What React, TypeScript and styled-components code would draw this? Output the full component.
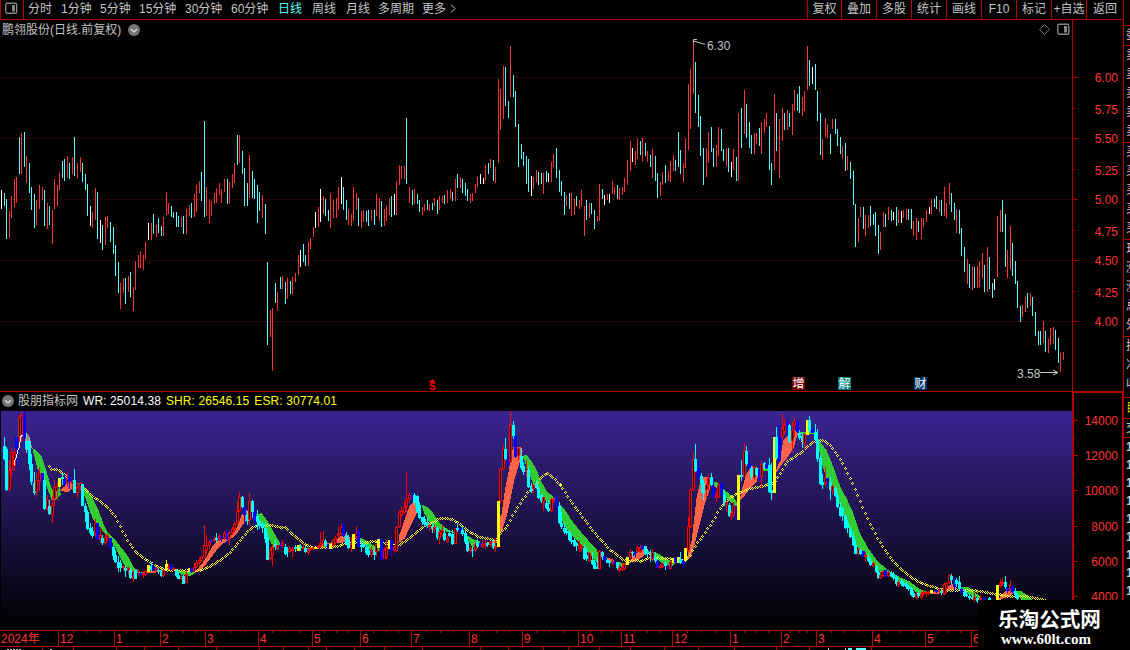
import React from "react";
import styled, { createGlobalStyle } from "styled-components";

const RED = "#b40000";
const FONT = '"Liberation Sans", "Noto Sans CJK SC", sans-serif';

const Global = createGlobalStyle`
  html, body { margin: 0; padding: 0; background: #000; overflow: hidden; }
  * { box-sizing: border-box; }
`;

const Page = styled.div`
  position: relative;
  display: flex;
  width: 1130px;
  height: 650px;
  overflow: hidden;
  background: #000;
  color: #c4c4c4;
  font: 12px/20px ${FONT};
  white-space: nowrap;
`;
const Main = styled.div`
  flex: none;
  width: 1123px;
  display: flex;
  flex-direction: column;
`;
const Toolbar = styled.div`
  display: flex;
  flex: none;
  height: 20px;
  line-height: 19px;
  border-bottom: 1px solid ${RED};
`;
const ToggleCell = styled.div`
  width: 24px;
  height: 19px;
  padding: 2px 0 0 4px;
  border-left: 1px solid ${RED};
  border-right: 1px solid ${RED};
  margin-right: 4px;
  svg { display: block; }
`;
const Tab = styled.div<{ $w: number; $active?: boolean }>`
  width: ${(p) => p.$w}px;
  color: ${(p) => (p.$active ? "#54fcfc" : "#c4c4c4")};
`;
const Actions = styled.div`
  display: flex;
  margin-left: auto;
`;
const Action = styled.div<{ $w: number }>`
  width: ${(p) => p.$w}px;
  border-left: 1px solid ${RED};
  text-align: center;
`;
const Workspace = styled.div`
  display: flex;
  flex: none;
  height: 630px;
`;
const Charts = styled.div`
  flex: none;
  width: 1072px;
  display: flex;
  flex-direction: column;
  svg { display: block; flex: none; }
`;
const TitleRow = styled.div`
  display: flex;
  flex: none;
  align-items: center;
  height: 19px;
  padding: 0 2px 0 2px;
  gap: 7px;
`;
const TitleTools = styled.div`
  display: flex;
  align-items: center;
  gap: 7px;
  margin-left: auto;
`;
const IndicatorRow = styled.div`
  display: flex;
  flex: none;
  align-items: center;
  gap: 5px;
  height: 20px;
  padding: 0 0 2px 2px;
  border-top: 1px solid ${RED};
`;
const Value = styled.span<{ $color: string }>`
  color: ${(p) => p.$color};
  letter-spacing: 0.1px;
`;
const Name = styled.span`
  margin-left: -1px;
`;
const SidePanel = styled.div`
  flex: none;
  width: 7px;
  display: flex;
  flex-direction: column;
  border-left: 1px solid ${RED};
  overflow: hidden;
`;
const SideGroup = styled.div<{ $h: number }>`
  flex: none;
  height: ${(p) => p.$h}px;
  border-bottom: 1px solid ${RED};
  overflow: hidden;
`;
const SideRow = styled.div<{ $h: number; $color?: string; $bold?: boolean }>`
  height: ${(p) => p.$h}px;
  line-height: ${(p) => p.$h}px;
  padding-left: 2px;
  color: ${(p) => p.$color || "#c4c4c4"};
  font-weight: ${(p) => (p.$bold ? 700 : 400)};
`;
const Watermark = styled.div`
  position: absolute;
  right: 0;
  bottom: 0;
  width: 152px;
  height: 50px;
  padding: 5px 0 0 20px;
  background: #000;
  color: #fff;
`;
const SiteName = styled.div`
  font: 700 20.6px/27px "Noto Sans CJK SC", sans-serif;
`;
const SiteUrl = styled.div`
  padding-left: 3px;
  font: 700 15px/14px "Liberation Serif", serif;
`;

const UP = "#ff3232";
const DOWN = "#54fcfc";
const BAR_COLORS: Record<string, string> = { r: UP, c: DOWN, w: "#ffffff" };

/* Bars are recorded in thirds of a pixel: colour, x, high, low. */
type Block = { x: number; data: string };

const PRICE: Block[] = [
  { x: 0, data: "w4 480 536,c13 489 527,c19 507 627,r28 543 623,r34 498 564,r43 447 531,r49 441 519,c58 321 432,r64 309 432,c73 306 411,r79 378 459,c88 399 489,c94 471 540,c103 492 594,r109 510 585,r118 465 537,r127 471 510,c133 480 588,r142 519 597,c148 528 585,r157 540 642,r163 447 537,r172 465 528,r178 429 480,c187 393 444,c193 387 453,r202 378 444,c208 399 447,r217 381 432,c223 321 438,r232 399 444,r241 381 426,c247 399 456,c256 432 480,c262 462 558,w271 528 588,r277 546 594,r286 474 570,c292 486 627,w301 570 639,c307 585 660,r316 561 645,r322 558 594,c331 576 636,c340 591 672,c346 645 738,c355 696 789,r361 759 837,r370 744 789,c376 744 822,r385 738 786,c391 726 801,r400 771 843,r406 693 780,r415 675 714,r421 663 714,r430 675 720,r436 636 687,w445 579 630,r454 579 630,c460 552 612,r469 585 621,c475 564 609,c484 588 618,r490 561 618,r499 486 555,r505 519 552,c514 528 561,c520 546 564,c529 546 591,c535 558 591,r544 561 591,c550 558 612,r559 537 612,r568 525 558,c574 519 564,r583 492 561,r589 465 546,r598 453 489,c604 426 513,c613 273 561,r619 471 558,r628 510 579,r634 513 558,r643 489 522,r649 474 519,r658 459 495,r664 477 519,r673 447 486,c682 447 522,r688 456 519,r697 432 474,r703 399 459,c712 315 405,r718 315 399,c727 363 432,c733 414 528,c742 459 528,r748 375 504,c757 423 504,c763 447 507,c772 465 579,c778 486 543,r787 495 564,c796 522 612,c802 696 945,r811 840 921,r817 834 1023,c826 759 819,r832 786 843" },
  { x: 260, data: "c61 741 777,r67 738 777,c76 756 822,r82 744 807,c91 753 792,r97 741 792,r106 729 756,r115 675 735,w121 660 711,c130 642 696,c136 675 708,r145 636 708,r151 624 657,r160 591 621,w166 546 594,r175 531 591,w181 477 576,r190 498 552,c196 507 558,c205 540 573,r211 489 594,r220 510 564,r229 504 564,r235 471 540,w244 441 522,c250 471 540,c259 510 570,r265 537 585,r274 552 588,r280 471 573,r289 489 540,c295 504 588,r304 543 594,r310 540 576,c319 543 576,c325 540 588,r334 540 573,c343 540 585,r349 492 558,r358 504 573,c364 513 591,r373 537 588,r379 528 573,r388 504 555,c394 498 561,w403 492 555,r409 453 555,r418 405 465,r424 408 447,r433 408 447,c439 264 462,r448 471 519,c457 480 525,r463 477 522,c472 492 522,c478 510 546,r487 531 555,r493 522 543,c502 510 540,r508 522 543,c517 519 540,r523 504 528,c532 510 552,r538 498 540,r547 498 519,c553 495 522,r562 480 519,r571 477 507,c577 486 513,r586 447 513,c592 432 474,r601 441 474,c607 447 489,c616 459 498,c622 477 513,r631 492 519,r637 489 513,r646 462 489,r652 441 471,w661 432 462,w670 444 462,r676 405 453,c685 399 432,r691 387 414,c700 390 453,r706 411 459,r715 147 399,r721 177 300,r730 108 267,c736 111 228,c745 213 264,r751 48 201,c760 135 201,c766 183 291,c775 282 411,c784 342 387,c790 366 408,c799 378 462,c805 387 486,w814 438 498" },
  { x: 530, data: "r10 441 477,r19 420 456,c25 426 465,c34 429 462,r40 429 492,c49 423 456,w55 429 456,r64 396 456,r70 372 411,c79 354 444,c88 420 486,c94 453 498,c103 486 555,r109 495 528,c118 489 537,r124 489 558,r133 507 555,c139 498 528,r148 510 537,r154 480 531,r163 528 618,c169 510 570,r178 519 564,c184 519 552,c193 540 597,r202 558 576,r208 462 573,c217 477 507,w223 495 525,r232 492 510,w238 492 519,r247 453 492,r253 471 495,c262 465 507,r268 474 510,r277 471 495,r283 444 486,r292 390 465,r301 333 423,w307 354 396,r316 363 405,r322 327 387,c331 333 375,r337 324 393,c346 339 378,r352 363 396,c361 375 411,r367 357 444,c376 378 453,c382 429 504,r391 456 498,r397 426 465,c406 405 459,r415 423 453,r421 393 456,r430 375 423,c436 390 423,c445 306 411,c451 360 432,r460 399 456,r466 327 414,r475 162 360,r481 117 297,r490 36 192,c496 96 249,c505 195 291,c511 258 378,c520 354 465,r529 354 441,r535 306 399,c544 291 366,c550 354 411,r559 345 411,r565 291 378,c574 297 363,c580 357 393,r589 354 408,c595 354 426,w604 396 441,r610 357 420,c619 381 453,r625 249 453,c634 234 354,r643 180 312,c649 222 324,c658 276 354,c664 315 372,r673 309 372,r679 309 342,c688 294 348,r694 276 372,r703 267 309,r709 249 291,c718 288 420,c724 399 465,r733 192 420,c739 249 363,r748 267 444,r757 234 333,c763 249 300,r772 240 300,c778 249 291,r787 222 315,r793 180 243,c802 192 243,c808 168 249,r817 201 258,r823 183 243,r832 48 180" },
  { x: 800, data: "c28 90 168,w37 111 162,c46 102 180,c52 183 273,c61 249 375,r67 327 390,r76 264 321,r82 282 324,c91 312 372,r97 267 297,c106 267 312,c112 297 348,c121 321 372,r127 348 387,c136 339 423,r142 378 420,c151 396 447,c160 423 525,c166 522 651,r175 564 636,r181 531 561,c190 531 597,r196 555 618,r205 555 594,c211 528 588,c220 552 585,c226 546 618,c235 585 672,r241 606 660,r250 546 591,c256 552 591,r265 531 570,c274 540 573,w280 546 570,c289 531 588,r295 540 579,w304 543 579,r310 540 564,r319 537 570,c325 537 570,c334 537 597,r340 573 618,r349 564 630,c355 573 606,r364 564 627,r370 564 591,r379 540 576,w388 531 552,r394 507 552,c403 507 531,c409 498 537,r418 510 546,c424 510 558,r433 471 558,r439 519 564,r448 459 525,c454 489 546,c463 519 570,r469 537 609,c478 540 612,c484 594 678,c493 651 726,r502 687 762,c508 702 774,r517 708 780,c523 711 774,r532 708 774,r538 693 771,r547 669 744,c553 705 786,r562 651 786,c568 681 777,c577 759 804,w583 747 780,r592 558 741,r601 540 606,c607 510 606,c616 552 711,r622 660 744,r631 588 720,c637 639 738,c646 693 762,c652 753 834,c661 828 876,r667 825 861,r676 801 846,c682 789 834,r691 789 828,c697 801 858,c706 846 918,c715 903 945,c721 903 945,r730 873 939,c736 903 966,r745 927 969,r751 894 945,r760 891 942,c766 900 960,c775 924 999,r781 969 1026,r790 966 990" },
];

/* Candles, same unit: colour, x, high, body top, body bottom, low. */
const CANDLES: Block[] = [
  { x: 0, data: "c13 171 198 236 240,c19 200 208 330 333,r28 240 270 327 336,r34 204 216 270 290,r43 204 216 258 273,b49 171 171 210 262,r58 105 114 171 183,r64 96 105 171 186,b73 93 105 171 210,c79 160 183 207 218,c88 170 183 252 270,c94 222 252 306 315,c103 276 309 339 345,r109 279 300 336 351,r118 261 279 303 333,b127 279 279 300 312,c133 270 300 387 390,r142 345 357 387 393,c148 360 378 403 405,r157 348 375 405 429,r163 300 321 357 378,r172 310 318 321 360,y178 294 294 321 321,c187 279 291 297 316,b193 283 297 312 320,r202 280 297 309 321,b208 285 291 303 327,r217 300 303 312 330,c223 267 300 339 339,r232 309 321 339 354,r241 306 309 321 333,c247 312 312 378 378,c256 370 378 396 425,c262 390 396 447 450,c271 430 444 459 465,c277 440 453 468 474,r286 417 429 462 471,b292 429 429 480 480,r301 442 465 480 490,c307 465 474 490 495,r316 462 470 490 495,r322 460 465 474 483,b331 473 474 500 510,c340 495 500 528 540,c346 510 525 546 550,c355 528 546 563 576,c361 540 550 563 575,r370 555 558 564 570,c376 555 564 573 591,r385 560 564 573 585,c391 564 570 595 597,r400 570 588 597 606,c406 570 570 597 597,r415 567 573 576 588,b421 576 579 585 587,r430 573 579 585 594,r436 570 573 585 588,y445 555 555 576 576,c454 546 558 570 573,b460 546 557 570 573,r469 561 564 573 576,c475 564 570 573 582,c484 567 570 588 591,r490 567 570 588 591,y499 540 552 570 570,r505 552 561 564 570,b514 549 555 570 570,r520 560 564 570 573,c529 568 570 588 590,c535 575 585 596 597,r544 585 588 597 600,c550 585 588 611 611,r559 570 582 610 610,y568 564 564 576 576,b574 560 564 576 580,r583 549 561 573 575,r589 540 549 561 565,r598 530 540 550 556,r604 528 531 543 546,r613 435 495 531 534,r619 465 495 512 524,r628 480 486 498 510,b634 477 480 486 489,r643 471 477 483 486,c649 459 474 480 490,r658 462 469 477 483,b664 465 467 474 487,r673 453 459 474 480,b682 453 453 477 491,r688 453 459 474 495,r697 441 447 459 465,r703 427 432 447 456,r712 366 393 432 435,r718 337 351 393 396,c727 348 351 381 384,b733 378 380 405 435,c742 393 405 423 435,r748 339 363 420 435,c757 360 362 396 415,b763 380 396 423 438,c772 390 408 426 450,c778 420 423 438 447,c787 426 432 444 460,c796 426 444 476 490,c802 460 471 540 540,r811 501 510 537 543,r817 492 501 525 557,c826 480 492 501 510,r832 495 495 505 510" },
  { x: 280, data: "b1 483 498 501 507,r7 480 489 498 505,c16 492 500 522 525,c22 500 504 516 530,r28 498 504 515 518,r37 501 507 513 530,c46 495 501 507 515,y55 495 495 512 512,c61 492 498 504 512,r70 491 501 507 510,c76 497 504 516 520,r85 507 510 518 526,r91 501 504 510 512,r100 500 502 508 510,y106 500 501 507 507,r115 495 498 504 506,r121 456 489 498 500,r130 453 480 492 500,c136 477 483 498 500,b145 492 493 506 510,y151 492 492 506 506,r160 477 480 498 500,r166 468 474 489 492,r175 441 459 468 475,r184 432 441 462 465,b190 426 438 468 470,c199 455 468 492 495,c205 465 480 504 508,r214 470 492 504 515,y220 462 462 506 506,r229 438 459 470 480,b235 444 453 501 505,c244 480 495 500 515,c250 485 492 500 505,c259 492 500 519 524,c265 497 510 525 530,r274 500 512 525 530,c283 500 510 525 540,r289 492 492 515 528,y296 477 477 504 504,b304 477 477 540 540,r313 505 510 538 538,r319 480 500 530 538,y328 480 480 507 507,b334 477 480 513 530,r343 498 501 512 518,r349 438 441 512 515,r358 390 399 441 445,r364 381 393 405 410,r373 366 381 399 402,r379 276 357 381 396,r388 339 345 357 370,b397 339 345 357 362,c403 339 345 370 378,c412 345 348 396 400,c418 366 375 414 417,c427 411 411 427 435,c433 408 418 433 440,c442 415 425 437 445,r448 432 435 441 452,c457 430 438 447 460,r463 435 441 450 459,c472 437 444 474 480,r478 450 456 474 492,r487 435 450 465 470,c493 444 459 480 483,r502 468 474 486 490,c508 450 459 468 471,c517 450 462 492 494,r526 444 444 493 493,c532 429 444 450 456,b541 444 444 454 460,c547 438 450 462 468,c556 450 459 486 492,c562 470 483 512 515,r571 500 505 513 518,c577 500 510 514 530,r586 485 492 510 515,c592 477 486 497 505,b601 486 489 500 501,r607 480 492 500 503,r616 481 489 494 506,c622 485 489 495 500,r631 483 486 495 500,c640 480 489 504 508,r646 477 497 504 515,y655 363 363 500 500,r661 261 267 363 370,r670 192 207 267 270,c676 174 207 237 240,b685 220 228 249 258,r691 93 135 246 249,c700 123 135 168 178,b706 165 168 231 235,r715 200 204 228 240,c724 205 228 264 270,c730 245 258 276 285,r739 240 270 276 290,c745 258 270 321 324,c754 310 318 333 340,r760 312 315 327 340,c769 300 312 324 327,c775 318 324 354 357,c784 342 345 363 370,r790 350 351 366 393,c799 360 369 384 387,c805 360 384 394 397,r814 354 357 393 396,r820 350 357 363 370,b829 342 354 381 405,c838 365 378 429 432" },
  { x: 560, data: "c4 396 429 441 447,c13 430 444 456 462,c19 440 453 459 465,c28 450 456 480 483,c34 465 480 486 492,c43 475 480 498 500,c49 486 489 498 513,r58 480 492 507 515,r64 492 501 507 515,c73 495 504 537 540,c79 505 525 537 543,r88 515 519 543 546,c97 515 540 552 555,c103 540 546 566 567,c111 535 560 566 567,r118 510 513 566 566,c127 512 516 531 540,b133 528 528 540 549,c142 533 540 549 550,c148 540 543 550 560,r157 535 543 550 555,b163 543 546 552 552,c172 546 549 564 570,r178 555 564 573 575,r187 550 561 570 573,r193 549 552 567 570,y202 531 531 555 555,r211 507 516 531 540,c217 513 516 520 530,b226 513 515 519 530,r232 498 500 516 520,r241 495 500 516 520,b247 492 498 508 510,c256 498 498 522 524,c262 507 513 522 530,c271 510 516 525 545,r277 508 516 540 546,c286 517 530 543 550,b292 540 543 563 564,r301 552 555 564 568,r307 546 555 560 563,c316 543 550 558 570,b325 555 558 566 567,r331 540 546 566 566,y340 534 534 549 549,b346 530 532 549 550,y355 531 532 549 549,c361 515 537 549 551,b370 537 540 551 564,y377 504 504 543 543,r385 411 438 513 516,r391 321 330 440 444,r400 216 237 330 333,c406 192 237 273 276,b415 240 264 290 300,c424 280 288 312 340,c430 300 309 340 360,r439 310 315 330 355,r445 282 294 315 330,c454 279 291 315 318,b460 303 318 352 354,r469 335 345 354 367,r475 305 315 350 354,b484 306 312 345 348,c493 330 345 375 378,r499 360 366 375 396,c508 370 375 408 411,r514 390 399 408 420,r520 366 378 408 411,b530 378 378 420 420,y535 285 285 420 420,c544 240 285 290 303,r553 189 213 290 290,c559 198 213 252 258,b568 225 252 264 267,c574 258 264 290 300,r583 258 260 294 300,c589 262 265 285 290,b598 262 267 298 300,r604 243 252 290 320,c613 246 249 264 270,b619 246 252 264 268,c628 234 255 336 339,c634 250 330 339 360,y643 171 171 339 339,c649 141 171 234 240,b658 136 171 243 246,r667 102 147 171 180,r673 117 135 156 165,b682 120 132 147 165,c688 132 135 186 190,r697 129 150 183 215,r703 114 123 135 171,b712 123 123 156 159,c718 150 159 174 180,c727 159 168 186 204,r733 159 162 192 207,y742 120 120 165 165,c748 108 120 153 156,b757 147 148 158 160,c766 132 156 180 183,c772 147 180 237 246,c781 225 234 312 315,c787 282 306 315 328,r796 261 294 312 318,b802 294 294 303 318,c811 290 306 330 360,r817 315 318 333 345,c826 318 324 348 351,c832 336 345 381 384" },
  { x: 840, data: "c1 366 381 408 411,c7 380 384 408 423,c16 405 408 444 447,c22 420 430 444 460,c31 440 447 471 474,c40 453 468 495 498,c46 480 495 521 523,r55 504 507 522 525,c61 504 510 522 525,b70 513 513 530 530,r76 516 525 531 546,c85 520 531 543 546,c91 535 543 555 558,r100 545 550 558 561,c109 555 558 576 578,c115 570 576 595 597,r121 576 585 594 597,r130 570 573 588 591,b136 570 570 590 590,r145 573 576 588 591,c154 573 579 588 591,c160 576 582 594 600,c169 585 591 612 618,r175 600 606 615 621,c184 598 603 612 618,c190 603 609 618 621,c199 606 612 621 627,c205 615 618 627 633,c214 620 624 645 648,c220 633 639 650 653,r229 636 642 654 657,c235 633 639 648 654,r244 637 642 654 657,r250 630 636 642 648,r259 633 636 642 651,r265 633 635 640 645,y274 630 630 640 640,b289 627 629 635 640,r298 624 630 636 642,c304 624 632 640 645,r313 609 612 642 645,r319 606 609 627 640,r328 583 585 610 612,c334 583 588 600 612,b343 590 600 621 640,c349 594 600 612 620,c358 588 606 627 630,b364 624 626 638 640,c373 630 636 648 651,c379 630 642 648 651,c388 640 648 654 660,c397 645 650 656 660,r403 640 650 660 665,c412 650 655 663 668,r421 645 654 660 665,b433 650 653 659 662,c448 652 655 663 665,y472 615 615 660 660,r481 597 610 618 625,r487 594 606 612 618,c496 588 606 621 627,b502 621 624 633 640,r511 600 615 630 640,b517 615 617 635 640,c526 625 632 645 650,c532 640 645 657 660" },
];

const GREEN = "#32cd32";
const CORAL = "#ff6347";
type Band = { x: number; up: boolean; points: string };
const BANDS: Band[] = [
  { x: 0, up: true, points: "73,195 79,163 85,163 97,203 85,210 73,210" },
  { x: 0, up: false, points: "97,204 108,210 125,230 140,275 153,320 162,343 180,320 182,344 165,362 155,360 140,320 125,285 112,265 103,228" },
  { x: 0, up: true, points: "180,332 190,320 205,308 217,303 228,310 217,326 205,338" },
  { x: 0, up: false, points: "232,309 247,315 262,330 277,352 295,390 310,430 325,460 345,478 360,498 385,530 400,560 415,573 432,577 432,580 400,577 385,568 370,550 355,520 345,500 330,480 310,455 295,435 280,420 270,395 255,350 240,318" },
  { x: 0, up: true, points: "436,577 445,573 490,570 514,567 530,564 500,572 475,577 445,579" },
  { x: 0, up: false, points: "525,567 540,573 575,576 587,578 570,588 545,585" },
  { x: 0, up: true, points: "580,580 598,560 613,541 625,520 640,495 655,480 685,475 700,460 712,440 725,405 740,390 745,420 730,432 712,460 695,475 670,490 650,510 620,550 600,574" },
  { x: 0, up: false, points: "768,402 785,400 795,412 808,432 820,455 840,488 835,508 820,500 808,480 795,445 782,430" },
  { x: 280, up: false, points: "75,505 100,503 115,506 90,509" },
  { x: 280, up: true, points: "112,503 125,492 145,490 165,483 190,462 205,465 212,478 200,486 170,490 145,498" },
  { x: 280, up: false, points: "225,475 240,472 260,483 280,495 300,508 290,517 270,508 250,495" },
  { x: 280, up: true, points: "355,490 358,465 370,430 380,400 390,375 405,366 420,375 410,400 390,440 375,475" },
  { x: 280, up: false, points: "424,374 440,380 460,400 480,430 510,453 550,462 500,455 470,445 450,430 433,400" },
  { x: 280, up: false, points: "560,465 580,478 600,485 600,500 575,500 565,480" },
  { x: 280, up: true, points: "600,495 650,480 650,490 620,497" },
  { x: 280, up: true, points: "660,410 665,400 675,330 685,280 692,235 700,200 722,202 728,215 718,250 703,300 690,365 680,410 665,455 660,462" },
  { x: 280, up: false, points: "727,228 740,225 755,245 770,270 780,298 800,333 825,355 815,375 800,365 780,345 765,320 755,300 740,260" },
  { x: 280, up: false, points: "835,368 850,383 870,413 870,450 855,430 842,400" },
  { x: 560, up: false, points: "0,375 20,400 40,427 70,465 110,508 120,540 110,546 95,530 60,490 30,462 10,430 0,412" },
  { x: 560, up: true, points: "135,530 160,540 170,548 150,548" },
  { x: 560, up: false, points: "160,545 195,549 205,555 185,560" },
  { x: 560, up: true, points: "205,550 225,522 245,508 264,508 262,520 235,540" },
  { x: 560, up: false, points: "265,515 290,518 325,540 345,548 340,557 318,556 300,545" },
  { x: 560, up: true, points: "380,537 395,480 402,420 410,350 425,290 440,290 450,300 450,325 435,370 420,430 405,490 390,535" },
  { x: 560, up: false, points: "455,308 470,306 480,320 500,335 520,350 532,370 530,382 515,368 490,345 475,330" },
  { x: 560, up: true, points: "538,365 545,330 560,280 575,258 600,265 590,305 570,325 550,352" },
  { x: 560, up: false, points: "607,264 630,266 630,272 607,272" },
  { x: 560, up: true, points: "640,290 660,240 670,180 685,165 700,160 712,145 716,155 700,205 680,235 655,268" },
  { x: 560, up: false, points: "720,156 765,155 765,161 720,161" },
  { x: 560, up: false, points: "768,160 780,185 800,212 820,260 835,305 850,340 870,380 870,430 855,405 840,375 820,325 800,295 787,255 775,200" },
  { x: 840, up: false, points: "0,320 20,355 40,400 60,460 85,505 110,540 140,568 180,592 210,605 240,628 270,638 240,643 200,618 170,600 120,574 90,543 60,515 40,475 20,425 0,375" },
  { x: 840, up: true, points: "268,638 300,630 298,642 272,642" },
  { x: 840, up: true, points: "310,635 330,615 345,610 350,627 325,632" },
  { x: 840, up: false, points: "362,621 385,620 405,637 425,653 400,652 380,637" },
  { x: 840, up: true, points: "475,657 495,633 527,633 515,645 480,660" },
  { x: 840, up: false, points: "526,633 545,633 577,660 545,660" },
];

const DOTS: Band[] = [
  { x: 0, up: true, points: "148,259 155,267 178,271 190,280 202,290" },
  { x: 0, up: true, points: "240,320 262,333 275,348 300,364 325,385 345,410 365,450 385,485 405,515 430,535 455,550 480,563 500,570 560,573 600,570 625,562 650,547 680,527 705,500 730,468 755,443 775,434 820,437 840,441" },
  { x: 280, up: true, points: "0,441 15,443 45,470 75,492 100,503 160,502 200,490 240,488 280,485 340,493 355,496 385,478 410,455 435,437 460,428 475,417 495,414 520,420 545,437 575,460 600,472 640,480 650,480 660,460 680,440 700,403 720,370 745,335 770,310 785,290 800,280 820,293 840,317" },
  { x: 560, up: true, points: "0,312 30,362 70,415 110,467 150,510 190,540 240,543 270,533 330,535 350,545 380,540 390,525 400,505 430,465 460,420 480,385 510,352 530,342 560,328 600,320 640,310 655,290 680,245 720,220 745,197 770,180 790,180 810,195 835,230" },
  { x: 840, up: true, points: "0,237 30,295 50,340 70,388 90,433 110,470 135,510 160,545 190,575 220,597 250,613 300,627 320,631 370,630 400,631 440,638 500,648 560,650 615,660" },
];

const page3 = (v: number) => Math.round(v / 3);

const PriceBars = () => (
  <g>
    {PRICE.flatMap((s) =>
      s.data.split(",").map((d) => {
        const [x, t, b] = d.slice(1).split(" ").map(Number);
        const y = 30 + page3(t);
        return <rect key={s.x + d} x={s.x + Math.floor(x / 3)} y={y} width={1} height={30 + page3(b) - y} fill={BAR_COLORS[d[0]]} />;
      })
    )}
  </g>
);

const CANDLE_COLORS: Record<string, string> = { c: "#00ffff", b: "#0000ff", y: "#ffff00", r: "#ff0000" };

const Candles = () => (
  <g>
    {CANDLES.flatMap((s) =>
      s.data.split(",").map((d) => {
        const [x, hi, top, bot, lo] = d.slice(1).split(" ").map(Number);
        const px = s.x + Math.floor(x / 3);
        const y1 = 380 + page3(top);
        const h = Math.max(1, 380 + page3(bot) - y1);
        const yh = 380 + page3(hi);
        const color = CANDLE_COLORS[d[0]];
        return (
          <g key={s.x + d} fill={color}>
            <rect x={px} y={yh} width={1} height={Math.max(1, 380 + page3(lo) - yh)} />
            <rect x={px - 1} y={y1} width={3} height={h} />
            {d[0] === "r" && h > 2 && <rect x={px} y={y1 + 1} width={1} height={h - 2} fill="#0a0518" />}
          </g>
        );
      })
    )}
  </g>
);

const Bands = () => (
  <g>
    {BANDS.map((b, i) => (
      <polygon key={i} transform={`translate(${b.x} 380) scale(${1 / 3})`} points={b.points} fill={b.up ? CORAL : GREEN} />
    ))}
  </g>
);

const Trend = () => {
  const marks: [number, number][] = [];
  DOTS.forEach((line) => {
    const pts = line.points.split(" ").map((p) => p.split(",").map(Number));
    for (let x = pts[0][0]; x <= pts[pts.length - 1][0]; x += 7.5) {
      const i = Math.max(1, pts.findIndex((p) => p[0] >= x));
      const [a, b] = [pts[i - 1], pts[i]];
      const y = a[1] + ((b[1] - a[1]) * (x - a[0])) / (b[0] - a[0]);
      marks.push([line.x + Math.floor(x / 3), 380 + Math.floor(y / 3)]);
    }
  });
  const d = marks.map(([x, y]) => `M${x} ${y - 1}h1v1h-1zM${x - 1} ${y}h1v1h-1zM${x + 1} ${y}h1v1h-1zM${x} ${y + 1}h1v1h-1z`).join("");
  return <path d={d} fill="#ffff30" />;
};

const PanelIcon = () => (
  <svg width="13" height="13" viewBox="0 0 13 13" fill="none">
    <rect x="0.75" y="1.25" width="11" height="10" rx="1.5" stroke="#858585" strokeWidth="1.4" />
    <rect x="7" y="3" width="3" height="6.5" fill="#858585" />
  </svg>
);
const ChevronBadge = () => (
  <svg width="12" height="12" viewBox="0 0 12 12">
    <circle cx="6" cy="6" r="6" fill="#747474" />
    <path d="M3 5l3 3 3-3" fill="none" stroke="#d8d8d8" strokeWidth="1.4" />
  </svg>
);

const TABS: [string, number][] = [["分时", 33], ["1分钟", 39], ["5分钟", 39], ["15分钟", 46], ["30分钟", 46], ["60分钟", 47], ["日线", 34], ["周线", 34], ["月线", 32], ["多周期", 44], ["更多", 26]];
const ACTIONS: [string, number][] = [["复权", 34], ["叠加", 35], ["多股", 35], ["统计", 35], ["画线", 35], ["F10", 35], ["标记", 35], ["+自选", 35], ["返回", 37]];

const MONTHS: [number, string][] = [[58, "12"], [114, "1"], [160, "2"], [205, "3"], [258, "4"], [312, "5"], [360, "6"], [411, "7"], [469, "8"], [522, "9"], [578, "10"], [621, "11"], [672, "12"], [730, "1"], [781, "2"], [816, "3"], [872, "4"], [925, "5"], [971, "6"]];
const MINOR = [73, 86, 100, 126, 137, 148, 171, 183, 195, 218, 230, 245, 272, 285, 299, 324, 336, 348, 373, 386, 398, 426, 440, 453, 482, 496, 509, 536, 549, 563, 590, 601, 611, 634, 647, 660, 687, 701, 716, 744, 756, 768, 790, 799, 807, 831, 844, 858, 886, 899, 913, 937, 948, 960];
const FOOT_TICKS = [42, 73, 116, 144, 178, 216, 259, 283, 308, 326, 354, 384, 422, 480, 508, 543, 568, 599, 630, 664, 698, 734, 776, 809, 871];
const PRICES: [string, number, number][] = [["6.00", 77, 78], ["5.75", 108, 110], ["5.50", 138, 139], ["5.25", 169, 171], ["5.00", 199, 200], ["4.75", 230, 232], ["4.50", 260, 261], ["4.25", 291, 293], ["4.00", 321, 322]];
const VOLUMES: [string, number][] = [["14000", 420], ["12000", 455], ["10000", 490], ["8000", 526], ["6000", 561], ["4000", 596]];
const GRID_Y = [77, 138, 199, 260, 321];
const EVENTS: [number, string, string][] = [[792, "增", "#780000"], [838, "解", "#007c7c"], [914, "财", "#003468"]];

const PriceChart = () => (
  <svg width="1072" height="352" viewBox="0 39 1072 352" shapeRendering="crispEdges" fontFamily={FONT} fontSize="12">
    {GRID_Y.map((y) => (
      <line key={y} x1="1" x2="1070" y1={y + 0.5} y2={y + 0.5} stroke="#a00808" strokeDasharray="1 3" />
    ))}
    <PriceBars />
    <g stroke="#c4c4c4" fill="none" shapeRendering="auto">
      <path d="M693.5 43v-3.5h3.5M694 41l4 1.3 7 2" />
      <path d="M1040 372.5h18M1053 370l5 2.5-5 2.5" />
    </g>
    <g fill="#c4c4c4">
      <text x="707" y="50">6.30</text>
      <text x="1017" y="378">3.58</text>
    </g>
    <path d="M432.5 379l-3 2.5h6z" fill="#f00" />
    <text x="429" y="390" fill="#f00" fontSize="10" fontWeight="700">S</text>
    {EVENTS.map(([x, label, bg]) => (
      <g key={label}>
        <rect x={x} y="377" width="13" height="13" fill={bg} />
        <text x={x + 0.5} y="388" fill="#fff">{label}</text>
      </g>
    ))}
  </svg>
);

const IndicatorChart = () => (
  <svg width="1072" height="239" viewBox="0 411 1072 239" shapeRendering="crispEdges" fontFamily={FONT} fontSize="12">
    <defs>
      <linearGradient id="night" x1="0" y1="0" x2="0" y2="1">
        <stop offset="0" stopColor="#3b2492" />
        <stop offset="1" stopColor="#000" />
      </linearGradient>
    </defs>
    <rect x="1" y="411" width="1071" height="219" fill="url(#night)" />
    <Bands />
    <Trend />
    <Candles />
    <path d="M14.5 465v-4l2-4 1-6 2-4 1-10 2-2" fill="none" stroke="#fff" />
    <g fill={RED}>
      <rect x="0" y="630" width="1072" height="1" />
      <rect x="0" y="646" width="1072" height="1" />
      {MONTHS.map(([x]) => <rect key={x} x={x} y="631" width="1" height="15" />)}
      {MINOR.map((x) => <rect key={x} x={x} y="631" width="1" height="2" />)}
      {FOOT_TICKS.map((x) => <rect key={x} x={x} y="647" width="1" height="3" />)}
    </g>
    <g fill={UP}>
      <text x="1" y="643">2024年</text>
      {MONTHS.map(([x, m]) => <text key={x} x={x + 2} y="643">{m}</text>)}
    </g>
    <g fill="#c4c4c4">
      {[7, 10, 13, 16, 19, 50].map((x) => <rect key={x} x={x} y="649" width="2" height="1" />)}
      {[828, 845].map((x) => <rect key={x} x={x} y="648" width="1" height="2" />)}
    </g>
    <path d="M848 648h4v2h-4zM856 648h10v2h-10z" fill={DOWN} />
  </svg>
);

const AxisSvg = styled.svg`
  display: block;
  flex: none;
`;

const ValueAxis = () => (
  <AxisSvg width="51" height="630" viewBox="1072 20 51 630" shapeRendering="crispEdges" fontFamily={FONT} fontSize="12">
    <g fill={RED}>
      <rect x="1072" y="20" width="1" height="371" />
      <rect x="1072" y="391" width="52" height="2" />
      <rect x="1072" y="391" width="2" height="259" />
      <rect x="1122" y="391" width="1" height="259" />
      {PRICES.map(([p, y], i) => <rect key={p} x="1073" y={y} width={i % 2 ? 2 : 5} height="1" />)}
      {VOLUMES.map(([v, y]) => (
        <React.Fragment key={v}>
          <rect x="1074" y={y} width="4" height="1" />
          <rect x="1074" y={y + 18} width="1" height="1" />
        </React.Fragment>
      ))}
    </g>
    <g fill={UP} textAnchor="end">
      {PRICES.map(([p, , y]) => <text key={p} x="1118" y={y + 4}>{p}</text>)}
      {VOLUMES.map(([v, y]) => <text key={v} x="1118" y={y + 5}>{v}</text>)}
    </g>
  </AxisSvg>
);

export default function App() {
  return (
    <Page>
      <Global />
      <Main>
        <Toolbar>
          <ToggleCell><PanelIcon /></ToggleCell>
          {TABS.map(([label, w]) => (
            <Tab key={label} $w={w} $active={label === "日线"}>{label}</Tab>
          ))}
          <svg width="10" height="18" viewBox="0 0 10 18">
            <path d="M3 4.5l4 4-4 4" fill="none" stroke="#c4c4c4" />
          </svg>
          <Actions>
            {ACTIONS.map(([label, w]) => <Action key={label} $w={w}>{label}</Action>)}
          </Actions>
        </Toolbar>
        <Workspace>
          <Charts>
            <TitleRow>
              <span>鹏翎股份(日线.前复权)</span>
              <ChevronBadge />
              <TitleTools>
                <svg width="11" height="11" viewBox="0 0 11 11">
                  <path d="M5.5 .5l5 5-5 5-5-5z" fill="none" stroke="#747474" />
                </svg>
                <PanelIcon />
              </TitleTools>
            </TitleRow>
            <PriceChart />
            <IndicatorRow>
              <ChevronBadge />
              <Name>股朋指标网</Name>
              <Value $color="#fff">WR: 25014.38</Value>
              <Value $color="#ffff00">SHR: 26546.15</Value>
              <Value $color="#ffff00">ESR: 30774.01</Value>
            </IndicatorRow>
            <IndicatorChart />
          </Charts>
          <ValueAxis />
        </Workspace>
      </Main>
      <SidePanel>
        <SideGroup $h={26} />
        <SideGroup $h={20}><SideRow $h={19}>委</SideRow></SideGroup>
        <SideGroup $h={97}>{[1, 2, 3, 4, 5].map((n) => <SideRow key={n} $h={19}>卖</SideRow>)}</SideGroup>
        <SideGroup $h={97}>{[1, 2, 3, 4, 5].map((n) => <SideRow key={n} $h={19}>买</SideRow>)}</SideGroup>
        <SideGroup $h={97}>{["现", "涨", "涨", "总", "外"].map((t, i) => <SideRow key={i} $h={19}>{t}</SideRow>)}</SideGroup>
        <SideGroup $h={61}>{["换", "净", "收"].map((t) => <SideRow key={t} $h={19}>{t}</SideRow>)}</SideGroup>
        <SideGroup $h={21}><SideRow $h={20} $color="#d0c800">目</SideRow></SideGroup>
        <SideGroup $h={19}><SideRow $h={19}>交</SideRow></SideGroup>
        {[1, 2, 3, 4, 5, 6, 7, 8, 9].map((n) => <SideRow key={n} $h={18} $bold>1</SideRow>)}
      </SidePanel>
      <Watermark>
        <SiteName>乐淘公式网</SiteName>
        <SiteUrl>www.60lt.com</SiteUrl>
      </Watermark>
    </Page>
  );
}
